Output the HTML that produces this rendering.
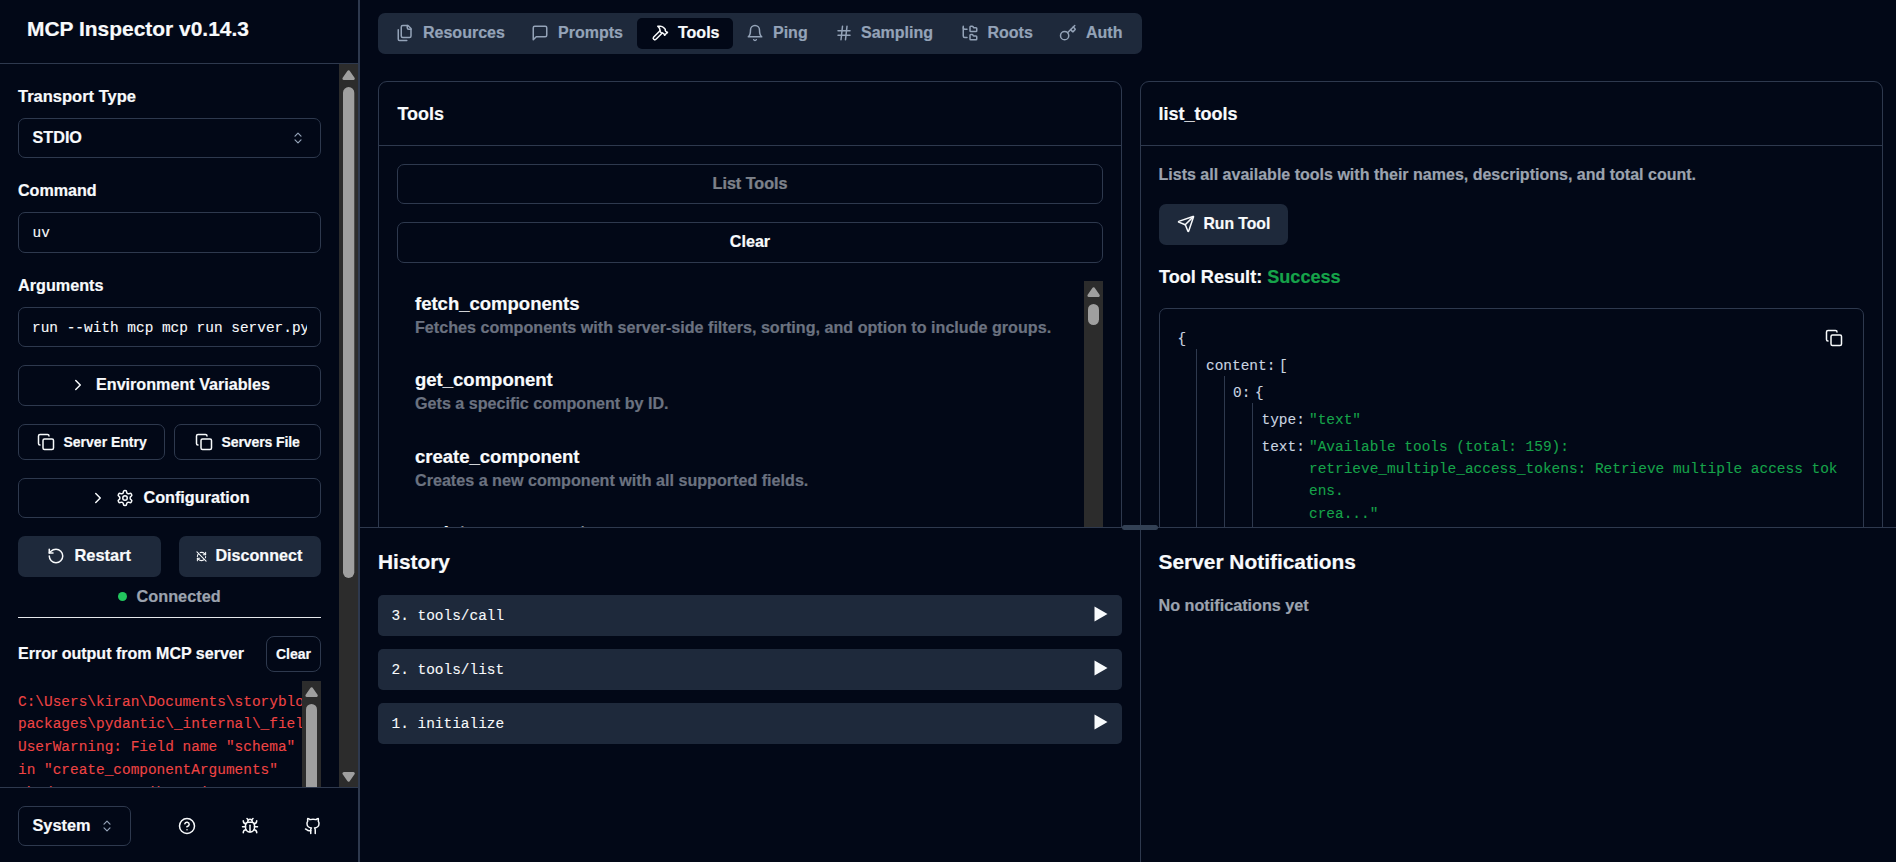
<!DOCTYPE html>
<html lang="en">
<head>
<meta charset="utf-8">
<title>MCP Inspector</title>
<style>
*{box-sizing:border-box;margin:0;padding:0}
html,body{width:1896px;height:862px;overflow:hidden;background:#020817;color:#f8fafc;
  font-family:"Liberation Sans",sans-serif;font-weight:bold;font-size:15px;-webkit-text-stroke:0.2px currentColor}
.abs{position:absolute}
.mono{font-family:"Liberation Mono",monospace;font-weight:normal;-webkit-text-stroke:0.1px currentColor}
svg{display:block}
.ic{fill:none;stroke:currentColor;stroke-width:2;stroke-linecap:round;stroke-linejoin:round}
.box{position:absolute;border:1px solid #2e394e;border-radius:7px}
.btn{position:absolute;border:1px solid #2e394e;border-radius:7px;display:flex;align-items:center;justify-content:center;white-space:nowrap}
.sec{position:absolute;background:#1e293b;border-radius:7px;display:flex;align-items:center;justify-content:center;white-space:nowrap}
.lbl{position:absolute;white-space:nowrap}
.muted{color:#94a3b8}
</style>
</head>
<body>
<!-- SIDEBAR -->
<div class="abs" id="sidebar" style="left:0;top:0;width:360px;height:862px;border-right:2px solid #2e394e"></div>
<div class="abs" style="left:0;top:63px;width:358px;height:1px;background:#2e394e"></div>
<div class="lbl" id="title" style="left:27px;top:17px;font-size:20.95px;line-height:24px">MCP Inspector v0.14.3</div>


<!-- sidebar scrollbar -->
<div class="abs" style="left:339px;top:64px;width:19px;height:723px;background:#2c2c2c"></div>
<svg class="abs" style="left:339px;top:64px" width="19" height="723" viewBox="0 0 19 723"><path d="M9.6 7.8 L14.3 14.5 L4.9 14.5 Z" fill="#9f9f9f" stroke="#9f9f9f" stroke-width="3" stroke-linejoin="round"/><rect x="4" y="23" width="11.300" height="491" rx="5.650" fill="#9f9f9f"/><path d="M9.6 716.2 L14.3 709.5 L4.9 709.5 Z" fill="#9f9f9f" stroke="#9f9f9f" stroke-width="3" stroke-linejoin="round"/></svg>

<div class="lbl" style="left:18px;top:86px;font-size:16.5px;line-height:20px">Transport Type</div>
<div class="box" style="left:18px;top:118px;width:303px;height:40px"></div>
<div class="lbl" style="left:32.5px;top:127px;font-size:16.2px;line-height:20px">STDIO</div>
<svg class="abs ic" style="left:289px;top:129px;color:#94a3b8;stroke-width:1.6" width="18" height="18" viewBox="0 0 24 24"><path d="M8 9.5 L12 5.5 L16 9.5"/><path d="M8 14.5 L12 18.5 L16 14.5"/></svg>

<div class="lbl" style="left:18px;top:180px;font-size:16.1px;line-height:20px">Command</div>
<div class="box" style="left:18px;top:212px;width:303px;height:41px"></div>
<div class="lbl mono" style="left:32.5px;top:222.5px;font-size:14.45px;line-height:20px">uv</div>

<div class="lbl" style="left:18px;top:275px;font-size:16.2px;line-height:20px">Arguments</div>
<div class="box" style="left:18px;top:307px;width:303px;height:40px"></div>
<div class="lbl mono" style="left:32px;top:318px;font-size:14.45px;line-height:20px;width:274.5px;overflow:hidden">run --with mcp mcp run server.py</div>

<div class="btn" style="left:18px;top:365px;width:303px;height:41px"></div>
<svg class="abs ic" style="left:69px;top:376px" width="18" height="18" viewBox="0 0 24 24"><path d="M9 18l6-6-6-6"/></svg>
<div class="lbl" style="left:96px;top:373.5px;font-size:16.15px;line-height:20px">Environment Variables</div>

<div class="btn" style="left:18px;top:424px;width:147px;height:36px"></div>
<svg class="abs ic" style="left:37px;top:433px" width="18" height="18" viewBox="0 0 24 24"><rect x="8" y="8" width="14" height="14" rx="2"/><path d="M4 16c-1.100 0-2-.900-2-2V4c0-1.100.900-2 2-2h10c1.100 0 2 .900 2 2"/></svg>
<div class="lbl" style="left:63.5px;top:433px;font-size:14px;line-height:18px">Server Entry</div>
<div class="btn" style="left:174px;top:424px;width:147px;height:36px"></div>
<svg class="abs ic" style="left:195px;top:433px" width="18" height="18" viewBox="0 0 24 24"><rect x="8" y="8" width="14" height="14" rx="2"/><path d="M4 16c-1.100 0-2-.900-2-2V4c0-1.100.900-2 2-2h10c1.100 0 2 .900 2 2"/></svg>
<div class="lbl" style="left:221.5px;top:433px;font-size:14px;line-height:18px;letter-spacing:-0.1px">Servers File</div>

<div class="btn" style="left:18px;top:478px;width:303px;height:40px"></div>
<svg class="abs ic" style="left:89px;top:489px" width="18" height="18" viewBox="0 0 24 24"><path d="M9 18l6-6-6-6"/></svg>
<svg class="abs ic" style="left:116px;top:489px" width="18" height="18" viewBox="0 0 24 24"><path d="M12.220 2h-.440a2 2 0 0 0-2 2v.180a2 2 0 0 1-1 1.730l-.430.250a2 2 0 0 1-2 0l-.150-.080a2 2 0 0 0-2.730.730l-.220.380a2 2 0 0 0 .730 2.730l.150.100a2 2 0 0 1 1 1.720v.510a2 2 0 0 1-1 1.740l-.150.090a2 2 0 0 0-.730 2.730l.220.380a2 2 0 0 0 2.730.730l.150-.080a2 2 0 0 1 2 0l.430.250a2 2 0 0 1 1 1.730V20a2 2 0 0 0 2 2h.440a2 2 0 0 0 2-2v-.180a2 2 0 0 1 1-1.730l.430-.250a2 2 0 0 1 2 0l.150.080a2 2 0 0 0 2.730-.730l.220-.390a2 2 0 0 0-.730-2.730l-.150-.080a2 2 0 0 1-1-1.740v-.500a2 2 0 0 1 1-1.740l.150-.090a2 2 0 0 0 .730-2.730l-.220-.380a2 2 0 0 0-2.730-.730l-.150.080a2 2 0 0 1-2 0l-.430-.250a2 2 0 0 1-1-1.730V4a2 2 0 0 0-2-2z"/><circle cx="12" cy="12" r="3"/></svg>
<div class="lbl" style="left:143.5px;top:486.5px;font-size:16.2px;line-height:20px">Configuration</div>

<div class="sec" style="left:18px;top:536px;width:143px;height:41px"></div>
<svg class="abs ic" style="left:47px;top:547px" width="18" height="18" viewBox="0 0 24 24"><path d="M3 12a9 9 0 1 0 9-9 9.750 9.750 0 0 0-6.740 2.740L3 8"/><path d="M3 3v5h5"/></svg>
<div class="lbl" style="left:74.5px;top:544.5px;font-size:16.4px;line-height:20px">Restart</div>
<div class="sec" style="left:179px;top:536px;width:142px;height:41px"></div>
<svg class="abs ic" style="left:196px;top:550.600px;stroke-width:2.300" width="11" height="11" viewBox="0 0 24 24"><path d="M21 8L18.740 5.740A9.750 9.750 0 0 0 12 3C11 3 10.030 3.160 9.130 3.470"/><path d="M8 16H3v5"/><path d="M3 12C3 9.510 4 7.260 5.640 5.640"/><path d="m3 16 2.260 2.260A9.750 9.750 0 0 0 12 21c2.490 0 4.740-1 6.360-2.640"/><path d="M21 12c0 1-.160 1.970-.470 2.870"/><path d="M21 3v5h-5"/><path d="M22 22 2 2"/></svg>
<div class="lbl" style="left:215.5px;top:544.5px;font-size:16.1px;line-height:20px">Disconnect</div>

<div class="abs" style="left:118px;top:592px;width:9px;height:9px;border-radius:50%;background:#22c55e"></div>
<div class="lbl" style="left:136.5px;top:586px;font-size:16.3px;line-height:20px;color:#9ca3af">Connected</div>
<div class="abs" style="left:18px;top:617px;width:303px;height:1px;background:#e5e7eb"></div>

<div class="lbl" style="left:18px;top:643px;font-size:16.05px;line-height:20px">Error output from MCP server</div>
<div class="btn" style="left:266px;top:636px;width:55px;height:36px;border-radius:8px"></div>
<div class="lbl" style="left:276px;top:644.5px;font-size:14px;line-height:18px">Clear</div>

<div class="abs mono" style="left:18px;top:681px;width:284px;height:106px;overflow:hidden;color:#ef4444;font-size:14.45px;line-height:22.75px;padding-top:9.5px;white-space:pre">C:\Users\kiran\Documents\storyblok-mcp\.venv\Lib\site-
packages\pydantic\_internal\_fields.py:198:
UserWarning: Field name "schema"
in "create_componentArguments"
shadows an attribute in parent
"ArgModelBase"</div>
<div class="abs" style="left:302px;top:681px;width:19px;height:106px;background:#2c2c2c"></div>
<svg class="abs" style="left:302px;top:681px" width="19" height="106" viewBox="0 0 19 106"><path d="M9.6 7.8 L14.3 14.5 L4.9 14.5 Z" fill="#9f9f9f" stroke="#9f9f9f" stroke-width="3" stroke-linejoin="round"/><path d="M4 106 V28.500 a5.500 5.500 0 0 1 11 0 V106 Z" fill="#9f9f9f"/></svg>

<!-- footer -->
<div class="abs" style="left:0;top:787px;width:358px;height:1px;background:#2e394e"></div>
<div class="abs" style="left:0;top:788px;width:358px;height:74px;background:#020817"></div>
<div class="box" style="left:18px;top:806px;width:113px;height:40px"></div>
<div class="lbl" style="left:32.5px;top:814.5px;font-size:16.3px;line-height:20px">System</div>
<svg class="abs ic" style="left:98px;top:817px;color:#94a3b8;stroke-width:1.6" width="18" height="18" viewBox="0 0 24 24"><path d="M8 9.5 L12 5.5 L16 9.5"/><path d="M8 14.5 L12 18.5 L16 14.5"/></svg>
<svg class="abs ic" style="left:178px;top:817px" width="18" height="18" viewBox="0 0 24 24"><circle cx="12" cy="12" r="10"/><path d="M9.090 9a3 3 0 0 1 5.830 1c0 2-3 3-3 3"/><path d="M12 17h.010"/></svg>
<svg class="abs ic" style="left:241px;top:817px" width="18" height="18" viewBox="0 0 24 24"><path d="m8 2 1.880 1.880"/><path d="M14.120 3.880 16 2"/><path d="M9 7.130v-1a3.003 3.003 0 1 1 6 0v1"/><path d="M12 20c-3.300 0-6-2.700-6-6v-3a4 4 0 0 1 4-4h4a4 4 0 0 1 4 4v3c0 3.300-2.700 6-6 6"/><path d="M12 20v-9"/><path d="M6.530 9C4.600 8.800 3 7.100 3 5"/><path d="M6 13H2"/><path d="M3 21c0-2.100 1.700-3.900 3.800-4"/><path d="M20.970 5c0 2.100-1.600 3.800-3.500 4"/><path d="M22 13h-4"/><path d="M17.200 17c2.100.1 3.800 1.900 3.800 4"/></svg>
<svg class="abs ic" style="left:304px;top:817px" width="18" height="18" viewBox="0 0 24 24"><path d="M15 22v-4a4.800 4.800 0 0 0-1-3.500c3 0 6-2 6-5.500.08-1.250-.27-2.480-1-3.500.28-1.150.28-2.350 0-3.500 0 0-1 0-3 1.500-2.640-.5-5.360-.5-8 0C6 2 5 2 5 2c-.3 1.150-.3 2.350 0 3.500A5.403 5.403 0 0 0 4 9c0 3.500 3 5.500 6 5.500-.39.490-.68 1.050-.85 1.650-.17.600-.22 1.230-.15 1.850v4"/><path d="M9 18c-4.510 2-5-2-7-2"/></svg>

<!-- MAIN -->

<!-- tab list -->
<div class="abs" style="left:378px;top:13px;width:764px;height:41px;background:#1e293b;border-radius:7px"></div>
<div class="abs" style="left:637px;top:18px;width:96px;height:31px;background:#020817;border-radius:5px"></div>
<div class="muted">
<svg class="abs ic" style="left:396px;top:24px" width="18" height="18" viewBox="0 0 24 24"><path d="M20 7h-3a2 2 0 0 1-2-2V2"/><path d="M9 18a2 2 0 0 1-2-2V4a2 2 0 0 1 2-2h7l4 4v10a2 2 0 0 1-2 2Z"/><path d="M3 7.600v12.800A1.600 1.600 0 0 0 4.600 22h9.800"/></svg>
<div class="lbl" style="left:423px;top:23px;font-size:16px;line-height:20px">Resources</div>
<svg class="abs ic" style="left:531px;top:24px" width="18" height="18" viewBox="0 0 24 24"><path d="M21 15a2 2 0 0 1-2 2H7l-4 4V5a2 2 0 0 1 2-2h14a2 2 0 0 1 2 2z"/></svg>
<div class="lbl" style="left:558px;top:23px;font-size:16px;line-height:20px">Prompts</div>
<svg class="abs ic" style="left:746px;top:24px" width="18" height="18" viewBox="0 0 24 24"><path d="M6 8a6 6 0 0 1 12 0c0 7 3 9 3 9H3s3-2 3-9"/><path d="M10.300 21a1.940 1.940 0 0 0 3.400 0"/></svg>
<div class="lbl" style="left:773px;top:23px;font-size:16px;line-height:20px">Ping</div>
<svg class="abs ic" style="left:835px;top:24px" width="18" height="18" viewBox="0 0 24 24"><path d="M4 9h16"/><path d="M4 15h16"/><path d="M10 3 8 21"/><path d="M16 3l-2 18"/></svg>
<div class="lbl" style="left:861px;top:23px;font-size:16px;line-height:20px">Sampling</div>
<svg class="abs ic" style="left:961px;top:24px" width="18" height="18" viewBox="0 0 24 24"><path d="M20 10a1 1 0 0 0 1-1V6a1 1 0 0 0-1-1h-2.500a1 1 0 0 1-.800-.400l-.900-1.200A1 1 0 0 0 15 3h-2a1 1 0 0 0-1 1v5a1 1 0 0 0 1 1Z"/><path d="M20 21a1 1 0 0 0 1-1v-3a1 1 0 0 0-1-1h-2.900a1 1 0 0 1-.880-.550l-.420-.850a1 1 0 0 0-.920-.600H13a1 1 0 0 0-1 1v5a1 1 0 0 0 1 1Z"/><path d="M3 5a2 2 0 0 0 2 2h3"/><path d="M3 3v13a2 2 0 0 0 2 2h3"/></svg>
<div class="lbl" style="left:987.5px;top:23px;font-size:16px;line-height:20px">Roots</div>
<svg class="abs ic" style="left:1059px;top:24px" width="18" height="18" viewBox="0 0 24 24"><path d="m15.500 7.500 2.300 2.300a1 1 0 0 0 1.400 0l2.100-2.100a1 1 0 0 0 0-1.400L19 4"/><path d="m21 2-9.600 9.600"/><circle cx="7.500" cy="15.500" r="5.500"/></svg>
<div class="lbl" style="left:1086px;top:23px;font-size:16px;line-height:20px">Auth</div>
</div>
<svg class="abs ic" style="left:651px;top:24px" width="18" height="18" viewBox="0 0 24 24"><path d="m15 12-8.373 8.373a1 1 0 1 1-3-3L12 9"/><path d="m18 15 4-4"/><path d="m21.500 11.500-1.914-1.914A2 2 0 0 1 19 8.172V7l-2.260-2.260a6 6 0 0 0-4.202-1.756L9 2.960l.920.820A6.180 6.180 0 0 1 12 8.400V10l2 2h1.172a2 2 0 0 1 1.414.586L18.500 14.500"/></svg>
<div class="lbl" style="left:678px;top:23px;font-size:16px;line-height:20px">Tools</div>

<!-- left card -->
<div class="abs" style="left:378px;top:81px;width:744px;height:460px;border:1px solid #2e394e;border-radius:9px"></div>
<div class="abs" style="left:379px;top:145px;width:742px;height:1px;background:#2e394e"></div>
<div class="lbl" style="left:397.5px;top:103px;font-size:17.95px;line-height:22px">Tools</div>
<div class="btn" style="left:397px;top:164px;width:706px;height:40px;font-size:16.1px;padding-bottom:2px"><span style="opacity:.5">List Tools</span></div>
<div class="btn" style="left:397px;top:222px;width:706px;height:41px;font-size:16.1px;padding-bottom:2px">Clear</div>

<div class="lbl" style="left:415px;top:293px;font-size:18.5px;line-height:22px">fetch_components</div>
<div class="lbl" style="left:415px;top:317px;font-size:16.14px;line-height:20px;color:#6b7280">Fetches components with server-side filters, sorting, and option to include groups.</div>
<div class="lbl" style="left:415px;top:369px;font-size:18.5px;line-height:22px">get_component</div>
<div class="lbl" style="left:415px;top:393px;font-size:16.14px;line-height:20px;color:#6b7280">Gets a specific component by ID.</div>
<div class="lbl" style="left:415px;top:446px;font-size:18.5px;line-height:22px">create_component</div>
<div class="lbl" style="left:415px;top:470px;font-size:16.14px;line-height:20px;color:#6b7280">Creates a new component with all supported fields.</div>
<div class="lbl" style="left:415px;top:522px;font-size:18.5px;line-height:22px">update_component</div>
<div class="abs" style="left:1084px;top:281px;width:19px;height:246px;background:#2c2c2c"></div>
<svg class="abs" style="left:1084px;top:281px" width="19" height="60" viewBox="0 0 19 60"><path d="M9.6 7.8 L14.3 14.5 L4.9 14.5 Z" fill="#9f9f9f" stroke="#9f9f9f" stroke-width="3" stroke-linejoin="round"/><rect x="4" y="23" width="11" height="21" rx="5.500" fill="#9f9f9f"/></svg>

<!-- right card -->
<div class="abs" style="left:1140px;top:81px;width:743px;height:460px;border:1px solid #2e394e;border-radius:9px"></div>
<div class="abs" style="left:1141px;top:145px;width:741px;height:1px;background:#2e394e"></div>
<div class="lbl" style="left:1158.5px;top:103px;font-size:18px;line-height:22px">list_tools</div>
<div class="lbl" style="left:1158.5px;top:163.5px;font-size:16.03px;line-height:20px;color:#9ca3af">Lists all available tools with their names, descriptions, and total count.</div>
<div class="sec" style="left:1159px;top:204px;width:129px;height:41px"></div>
<svg class="abs ic" style="left:1177px;top:215px" width="18" height="18" viewBox="0 0 24 24"><path d="M14.536 21.686a.5.5 0 0 0 .937-.024l6.500-19a.496.496 0 0 0-.635-.635l-19 6.500a.5.5 0 0 0-.024.937l7.930 3.180a2 2 0 0 1 1.112 1.110z"/><path d="m21.854 2.147-10.940 10.939"/></svg>
<div class="lbl" style="left:1203.5px;top:213.5px;font-size:15.7px;line-height:20px">Run Tool</div>
<div class="lbl" style="left:1159px;top:265px;font-size:18.1px;line-height:24px">Tool Result: <span style="color:#16a34a">Success</span></div>

<div class="abs" style="left:1159px;top:308px;width:705px;height:240px;border:1px solid #2e394e;border-radius:7px"></div>
<svg class="abs ic" style="left:1825px;top:329px" width="18" height="18" viewBox="0 0 24 24"><rect x="8" y="8" width="14" height="14" rx="2"/><path d="M4 16c-1.100 0-2-.900-2-2V4c0-1.100.900-2 2-2h10c1.100 0 2 .900 2 2"/></svg>
<div class="abs" style="left:1196px;top:349px;width:1px;height:180px;background:#2e394e"></div>
<div class="abs" style="left:1224px;top:376px;width:1px;height:151px;background:#2e394e"></div>
<div class="abs" style="left:1252px;top:403px;width:1px;height:131px;background:#2e394e"></div>
<div class="mono" style="font-size:14.45px;line-height:20px;color:#cbd5e1">
<div class="lbl" style="left:1177.5px;top:329px">{</div>
<div class="lbl" style="left:1206px;top:356px">content:</div><div class="lbl" style="left:1279px;top:356px">[</div>
<div class="lbl" style="left:1233px;top:383px">0:</div><div class="lbl" style="left:1255px;top:383px">{</div>
<div class="lbl" style="left:1261.5px;top:410px">type:</div><div class="lbl" style="left:1309px;top:410px;color:#16a34a">"text"</div>
<div class="lbl" style="left:1261.5px;top:437px">text:</div><div class="lbl" style="left:1309px;top:435.5px;color:#16a34a;line-height:22.4px;white-space:pre">"Available tools (total: 159):
retrieve_multiple_access_tokens: Retrieve multiple access tok
ens.
crea..."</div>
</div>

<!-- bottom pane -->
<div class="abs" style="left:360px;top:527px;width:1536px;height:335px;background:#020817;border-top:1px solid #2e394e"></div>
<div class="abs" style="left:1140px;top:528px;width:1px;height:334px;background:#2e394e"></div>
<div class="abs" style="left:1122px;top:525px;width:36px;height:5px;border-radius:2.500px;background:#334155"></div>
<div class="lbl" style="left:378px;top:548.5px;font-size:20.9px;line-height:26px">History</div>
<div class="abs" style="left:378px;top:595px;width:744px;height:41px;background:#1e293b;border-radius:5px"></div>
<div class="abs" style="left:378px;top:649px;width:744px;height:41px;background:#1e293b;border-radius:5px"></div>
<div class="abs" style="left:378px;top:703px;width:744px;height:41px;background:#1e293b;border-radius:5px"></div>
<div class="mono" style="font-size:14.45px;line-height:20px">
<div class="lbl" style="left:391.500px;top:606px">3. tools/call</div>
<div class="lbl" style="left:391.500px;top:660px">2. tools/list</div>
<div class="lbl" style="left:391.500px;top:714px">1. initialize</div>
</div>
<svg class="abs" style="left:1094px;top:606px" width="14" height="16" viewBox="0 0 14 16"><path d="M0.500 0.500 L13.500 8 L0.500 15.500 Z" fill="#f8fafc"/></svg>
<svg class="abs" style="left:1094px;top:660px" width="14" height="16" viewBox="0 0 14 16"><path d="M0.500 0.500 L13.500 8 L0.500 15.500 Z" fill="#f8fafc"/></svg>
<svg class="abs" style="left:1094px;top:714px" width="14" height="16" viewBox="0 0 14 16"><path d="M0.500 0.500 L13.500 8 L0.500 15.500 Z" fill="#f8fafc"/></svg>
<div class="lbl" style="left:1158.5px;top:548.5px;font-size:20.9px;line-height:26px">Server Notifications</div>
<div class="lbl" style="left:1158.5px;top:595px;font-size:16.2px;line-height:20px;color:#9ca3af">No notifications yet</div>

</body>
</html>
